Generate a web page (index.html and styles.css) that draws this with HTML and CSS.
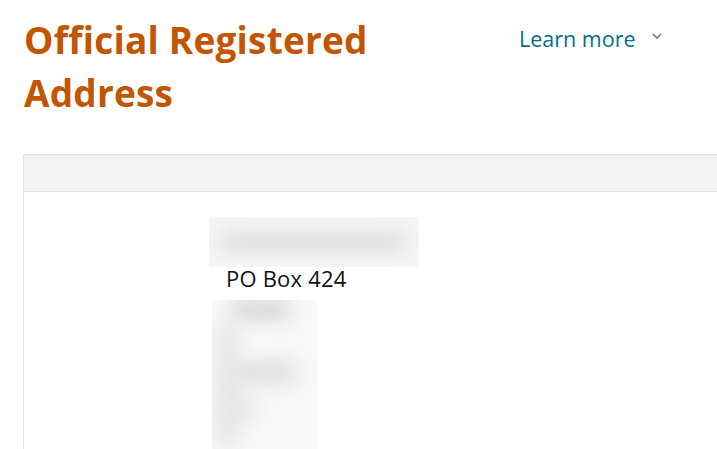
FILE: index.html
```html
<!DOCTYPE html>
<html lang="en">
<head>
    <meta charset="UTF-8">
    <meta name="viewport" content="width=device-width, initial-scale=1.0">
    <title>Official Registered Address</title>
    <link rel="stylesheet" href="styles.css">
</head>
<body>

<div class="top">
    <h1 class="title">Official Registered Address</h1>
    <a class="learn" href="#">Learn more
        <svg class="chev" width="12" height="8" viewBox="0 0 12 8"><path d="M2 2 L6 6 L10 2" fill="none" stroke="#777" stroke-width="1.6"/></svg>
    </a>
</div>

<div class="panel">
    <div class="panel-head"></div>
    <div class="panel-body">
        <div class="addr">
            <div class="redact redact-name"><span class="smudge s1"></span></div>
            <div class="line">PO Box 424</div>
            <div class="redact redact-rest">
                <span class="smudge s2"></span>
                <span class="smudge s3"></span>
                <span class="smudge s4"></span>
                <span class="smudge s5"></span>
            </div>
        </div>
    </div>
</div>

</body>
</html>
```

FILE: styles.css
```css
body {
    margin: 0;
    font-family: "Open Sans", Arial, sans-serif;
    background: #fff;
    overflow: hidden;
}
.top {
    display: flex;
    padding: 13px 0 0 24px;
}
.title {
    width: 400px;
    margin: 0;
    font-size: 37px;
    line-height: 53px;
    font-weight: bold;
    color: #c45500;
    letter-spacing: 0.2px;
}
.learn {
    margin: 10px 0 0 95px;
    color: #007185;
    font-size: 21.5px;
    text-decoration: none;
    display: flex;
    align-items: center;
    gap: 15px;
    height: 30px;
    white-space: nowrap;
}
.chev {
    margin-top: -4px;
}
.panel {
    margin: 35px 0 0 23px;
    width: 760px;
    border: 1px solid #e3e3e3;
    border-bottom: none;
    height: 400px;
}
.panel-head {
    height: 36px;
    background: #f2f2f2;
    border-bottom: 1px solid #e3e3e3;
}
.panel-body {
    padding: 25px 0 0 185px;
}
.redact {
    position: relative;
    overflow: hidden;
    background: #f6f6f6;
}
.redact-name {
    width: 210px;
    height: 50px;
}
.redact-rest {
    width: 106px;
    height: 150px;
    margin-left: 3px;
    background: #f9f9f9;
}
.smudge {
    position: absolute;
    background: #d8d8d8;
    border-radius: 12px;
    filter: blur(10px);
}
.s1 { left: 10px; top: 16px; width: 190px; height: 18px; background: #dadada; }
.s2 { left: 18px; top: 0; width: 62px; height: 20px; background: #d4d4d4; }
.s3 { left: 4px; top: 20px; width: 22px; height: 130px; background: #e4e4e4; }
.s4 { left: 22px; top: 62px; width: 64px; height: 22px; background: #dcdcdc; }
.s5 { left: 12px; top: 98px; width: 32px; height: 22px; background: #e2e2e2; }
.line {
    padding: 0 0 0 17px;
    height: 33px;
    font-size: 22px;
    line-height: 22px;
    letter-spacing: 0.2px;
    color: #111;
}
```
